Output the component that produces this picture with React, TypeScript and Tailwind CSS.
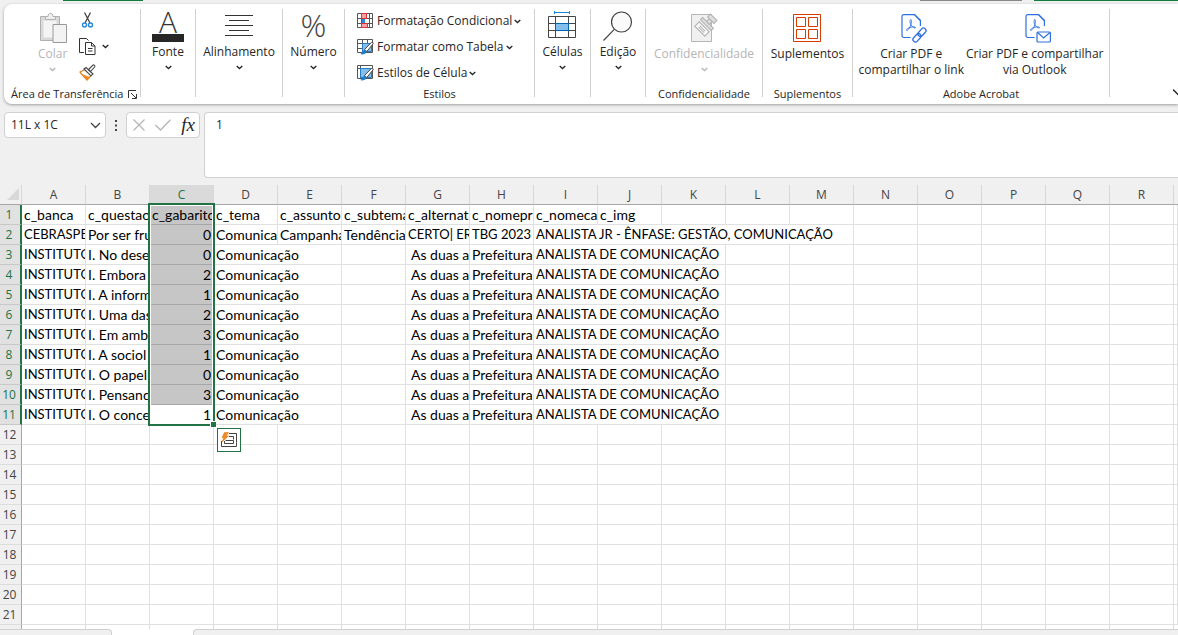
import type { ReactNode } from "react";
import clsx from "clsx";

const UI = "font-['Open_Sans','Noto_Sans',sans-serif]";

function Chevron({ className }: { className?: string }) {
  return (
    <svg className={clsx("w-[7px] h-[5px] shrink-0", className)} viewBox="0 0 7 5" fill="none" stroke="currentColor" strokeWidth="1.3">
      <path d="M.7 1 3.5 3.6 6.3 1" />
    </svg>
  );
}

function PasteIcon() {
  return (
    <svg width="28" height="32" viewBox="0 0 28 32" fill="none" stroke="#b0b0b0">
      <path d="M1.500 4.500h19v24h-19z" fill="#d9d9d9" />
      <path d="M4.500 8.500h13v17h-13z" fill="#f4f4f4" stroke="none" />
      <path d="M6.500 7.500v-3h2.500c0-2 1-3.200 2.500-3.200s2.500 1.200 2.500 3.200h2.500v3z" fill="#eee" />
      <path d="M14 12.500h13.500v18H14z" fill="#f3f3f3" stroke="#999" />
    </svg>
  );
}

function CutIcon() {
  return (
    <svg width="16" height="16" viewBox="0 0 16 16" fill="none">
      <path d="M5.500.5 11 11M11.500.5 6 11" stroke="#444" strokeWidth="1.300" />
      <circle cx="5.500" cy="13" r="2" stroke="#2b88d8" strokeWidth="1.400" />
      <circle cx="11.500" cy="13" r="2" stroke="#2b88d8" strokeWidth="1.400" />
    </svg>
  );
}

function CopyIcon() {
  return (
    <svg width="17" height="17" viewBox="0 0 17 17" fill="none" stroke="#333">
      <path d="M5 14.500H.5V.5h7l2 2" />
      <path d="M6.500 4.500h6l3.500 3.500v8.500H6.500z" fill="#fff" />
      <path d="M12.500 4.500V8H16M9 10.500h4.500M9 13h4.500" />
    </svg>
  );
}

function BrushIcon() {
  return (
    <svg width="17" height="17" viewBox="0 0 17 17" fill="none">
      <path d="M1 8 6 5.500l6 6L8 16 1.500 9z" fill="#fff" stroke="#e07b1a" strokeWidth="1.200" />
      <path d="M2 9.500 10.500 13 8 16z" fill="#f08c28" />
      <path d="m5 5 2-1.500 7 6.500-2 1.800z" fill="#fff" stroke="#444" strokeWidth="1.100" />
      <path d="m9.500 5.500 4.200-4.200c1-1 2.800.6 1.900 1.700L11.500 7.500z" fill="#fff" stroke="#444" strokeWidth="1.100" />
    </svg>
  );
}

function FontIcon() {
  return (
    <span className="flex w-8 flex-col items-center">
      <span className="h-[22px] text-[30px] leading-[20px] font-light text-[#333]">A</span>
      <span className="h-2 w-8 bg-[#262626]" />
    </span>
  );
}

function AlignIcon() {
  return (
    <svg width="28" height="24" viewBox="0 0 28 24" stroke="#333">
      <path d="M0 .5h28M4 5.500h20M0 10.500h28M4 15.500h20M0 20.500h28" />
    </svg>
  );
}

function CellsIcon() {
  return (
    <svg width="28" height="31" viewBox="0 0 28 31" fill="none">
      <path d="M6.500 0v3M21.500 0v3M6.500 1.500h15" stroke="#1a86d0" />
      <path d="M.5 5.500h27v21H.5zM7.500 5.500v21M20.500 5.500v21M.5 12.500h27M.5 19.500h27" stroke="#444" />
      <path d="M7.500 12.500h13v7h-13z" fill="#83beec" stroke="#0063b1" />
    </svg>
  );
}

function SearchIcon() {
  return (
    <svg width="30" height="32" viewBox="0 0 30 32" fill="none" stroke="#444" strokeWidth="1.200">
      <circle cx="18.500" cy="11" r="10" fill="#fafafa" />
      <path d="M11.300 18.300.5 29.500" />
    </svg>
  );
}

function LabelIcon() {
  return (
    <svg width="28" height="31" viewBox="0 0 28 31" fill="none" stroke="#b5b5b5">
      <path d="M1.500 2.500h20v27h-20z" fill="#f0f0f0" />
      <g transform="translate(12 17) rotate(45)" strokeWidth="1.200">
        <path d="M-7-3H7v6H-7z" fill="#fff" />
        <path d="M-4-.7h8M-4 1h8" strokeWidth="1" />
        <path d="M-7.500-8.500h15v3h-15z" fill="#e0e0e0" />
        <path d="M-2-12.500h4v4h-4z" fill="#e0e0e0" />
        <path d="M-4.500-16.500h9v4h-9z" fill="#e0e0e0" />
      </g>
    </svg>
  );
}

function AddinsIcon() {
  return (
    <svg width="28" height="28" viewBox="0 0 28 28" fill="none" stroke="#d83b01">
      <path d="M.5.5h27v27H.5zM3.500 3.500h9v9h-9zM15.500 3.500h9v9h-9zM3.500 15.500h9v9h-9zM15.500 15.500h9v9h-9z" />
    </svg>
  );
}

function PdfIcon({ kind }: { kind: "link" | "mail" }) {
  return (
    <svg className="mt-0.5 ml-1.5" width="26" height="29" viewBox="0 0 26 29" fill="none" stroke="#2f6fe0" strokeWidth="1.200">
      <path d="M9.500 23.500H3c-1.300 0-2-.8-2-2v-19C1 1.300 1.800.6 3 .6h10.500L19.400 6.500V12" />
      <path d="M13.500.6 19.400 6.500" />
      <path d="M9.700 5.500c1.200 0 .8 4.500-.6 7.200-1 2-2.300 3.800-3.400 3.800-1.300-.7 1.600-2.700 4.300-3.300 2.400-.6 4.800-.3 4.600.5-.4.800-3.200-.4-4.600-2.600-1.200-2-1.200-5.400-.3-5.600z" strokeWidth=".9" />
      {kind === "link" ? (
        <g transform="rotate(-48 18.500 21)" strokeWidth="1.300">
          <rect x="10" y="18.500" width="9.500" height="5" rx="2.500" />
          <rect x="17.500" y="18.500" width="9.500" height="5" rx="2.500" />
        </g>
      ) : (
        <g>
          <rect x="12" y="18" width="13.400" height="10" rx="1" fill="#fff" />
          <path d="m12.500 18.500 6.200 5.500 6.200-5.500" />
        </g>
      )}
    </svg>
  );
}

function ConditionalIcon() {
  return (
    <svg width="16" height="16" viewBox="0 0 16 16" fill="none">
      <path d="M.5.5h15v14H.5zM4.500.5v14M12.500.5v14M.5 5.500h15M.5 10.500h15" stroke="#555" />
      <path d="M4.500.5h5v5h-5zM4.500 10.500h6v4h-6z" fill="#f4a0a4" stroke="#e03038" />
      <path d="M5 6h3v4H5z" fill="#2b88d8" />
    </svg>
  );
}

function StyleTableIcon({ cell }: { cell?: boolean }) {
  return (
    <svg width="17" height="16" viewBox="0 0 17 16" fill="none">
      <path d={cell ? "M.5.5h15v13H.5zM3.500.5v13M.5 3.500h15" : "M.5.5h15v13H.5zM5.500.5v13M10.500.5v13M.5 4.500h15M.5 9.500h15"} stroke="#555" />
      <path d={cell ? "M3.500 3.500h11v9h-11z" : "M5.500 4.500h9v8h-9z"} fill="#83beec" stroke="#2b7cc4" />
      <path d="m7.500 10.500 6.800-7c1-1 2.500.4 1.700 1.500l-6.200 7.500z" fill="#fff" stroke="#444" />
      <path d="M3 15c2 0 2.300-3.500 4.500-4 1.800 0 2.600 1.600 1.500 3-1.300 1.500-4 1.700-6 1z" fill="#1a7fd0" />
    </svg>
  );
}

function RibbonGroup({ label, className, children }: { label?: string; className: string; children: ReactNode }) {
  return (
    <>
      <section className={clsx("flex shrink-0 flex-col justify-between pb-0.5", className)}>
        <div className="flex justify-center">{children}</div>
        {label && <div className="text-center text-[11px] leading-4">{label}</div>}
      </section>
      <span className="mt-[5px] h-[88px] w-px shrink-0 bg-[#d0d0d0]" />
    </>
  );
}

type BigButtonProps = { icon: ReactNode; label: ReactNode; low?: boolean; disabled?: boolean; arrow?: boolean };

function BigButton({ icon, label, low, disabled, arrow = true }: BigButtonProps) {
  return (
    <button
      type="button"
      disabled={disabled}
      className={clsx("flex shrink-0 flex-col items-center pt-[5px] whitespace-nowrap", disabled ? "text-[#b5b5b5]" : "text-[#262626]")}
    >
      <span className={clsx("flex items-center justify-center", low ? "h-[37px]" : "h-[35px]")}>{icon}</span>
      <span className="leading-4">{label}</span>
      {arrow && <Chevron className="mt-[5px]" />}
    </button>
  );
}

function StyleButton({ icon, label }: { icon: ReactNode; label: string }) {
  return (
    <button type="button" className="flex h-[26px] items-center whitespace-nowrap">
      <span className="w-5">{icon}</span>
      {label}
      <Chevron className="ml-0.5" />
    </button>
  );
}

function Ribbon() {
  return (
    <div className="relative ml-1 flex h-[100px] overflow-hidden rounded-l-lg bg-white text-[12px] text-[#262626] shadow-[0_1px_3px_rgba(0,0,0,0.35)]">
      <section className="flex w-[136px] shrink-0 flex-col justify-between pb-0.5">
        <div className="flex pl-[34px]">
          <BigButton icon={<PasteIcon />} label="Colar" low disabled />
          <div className="flex flex-col pt-[3px] pl-3">
            <button type="button" aria-label="Recortar" className="flex h-[26px] items-center"><CutIcon /></button>
            <button type="button" aria-label="Copiar" className="flex h-[26px] items-center gap-1.5"><CopyIcon /><Chevron /></button>
            <button type="button" aria-label="Pincel de Formatação" className="flex h-[26px] items-center"><BrushIcon /></button>
          </div>
        </div>
        <div className="flex items-center justify-between pr-[3px] pl-[7px] text-[11px] leading-4 whitespace-nowrap">
          Área de Transferência
          <button type="button" aria-label="Abrir painel">
            <svg width="9" height="9" viewBox="0 0 9 9" fill="none" stroke="#333">
              <path d="M.5 8V.5H8M3 3l5 5M8.500 4v4.500H4" />
            </svg>
          </button>
        </div>
      </section>
      <span className="mt-[5px] h-[88px] w-px shrink-0 bg-[#d0d0d0]" />
      <RibbonGroup className="w-[54px]">
        <BigButton icon={<FontIcon />} label="Fonte" />
      </RibbonGroup>
      <RibbonGroup className="w-[86px]">
        <BigButton icon={<AlignIcon />} label="Alinhamento" />
      </RibbonGroup>
      <RibbonGroup className="w-[61px]">
        <BigButton icon={<span className="h-9 text-[32px] leading-8 font-light text-[#444]">%</span>} label="Número" />
      </RibbonGroup>
      <RibbonGroup label="Estilos" className="w-[189px]">
        <div className="flex w-full flex-col items-start pt-1 pl-3">
          <StyleButton icon={<ConditionalIcon />} label="Formatação Condicional" />
          <StyleButton icon={<StyleTableIcon />} label="Formatar como Tabela" />
          <StyleButton icon={<StyleTableIcon cell />} label="Estilos de Célula" />
        </div>
      </RibbonGroup>
      <RibbonGroup className="w-[55px]">
        <BigButton icon={<CellsIcon />} label="Células" />
      </RibbonGroup>
      <RibbonGroup className="w-[54px]">
        <BigButton icon={<SearchIcon />} label="Edição" />
      </RibbonGroup>
      <RibbonGroup label="Confidencialidade" className="w-[116px]">
        <BigButton icon={<LabelIcon />} label="Confidencialidade" low disabled />
      </RibbonGroup>
      <RibbonGroup label="Suplementos" className="w-[89px]">
        <BigButton icon={<AddinsIcon />} label="Suplementos" low arrow={false} />
      </RibbonGroup>
      <RibbonGroup label="Adobe Acrobat" className="w-[256px]">
        <div className="flex gap-0.5">
          <BigButton icon={<PdfIcon kind="link" />} label={<>Criar PDF e<br />compartilhar o link</>} low arrow={false} />
          <BigButton icon={<PdfIcon kind="mail" />} label={<>Criar PDF e compartilhar<br />via Outlook</>} low arrow={false} />
        </div>
      </RibbonGroup>
      <button type="button" aria-label="Recolher faixa" className="mb-2 ml-auto self-end">
        <svg width="5" height="8" viewBox="0 0 5 8" fill="none" stroke="#222" strokeWidth="1.400">
          <path d="m0 1.500 6 6" />
        </svg>
      </button>
    </div>
  );
}

function FormulaBar() {
  return (
    <div className="flex items-start pt-2 pb-[7px] pl-1 text-[12px] text-[#262626]">
      <div className="flex h-[26px] w-[102px] items-center rounded border border-[#d0d0d0] bg-white pr-1 pl-1.5">
        <input aria-label="Caixa de nome" defaultValue="11L x 1C" className="w-full min-w-0 bg-transparent outline-none" />
        <button type="button" aria-label="Lista de nomes">
          <svg width="11" height="7" viewBox="0 0 11 7" fill="none" stroke="#444" strokeWidth="1.300">
            <path d="m1 1 4.500 4.500L10 1" />
          </svg>
        </button>
      </div>
      <svg className="mx-2 mt-2" width="4" height="11" viewBox="0 0 4 11" fill="#444">
        <path d="M1 0h2v2H1zM1 4.500h2v2H1zM1 9h2v2H1z" />
      </svg>
      <div className="flex h-[26px] w-[74px] items-center justify-between rounded border border-[#d0d0d0] bg-white pr-1 pl-1.5">
        <button type="button" aria-label="Cancelar">
          <svg width="12" height="12" viewBox="0 0 12 12" stroke="#b5b5b5" strokeWidth="1.300"><path d="m.5.5 11 11m0-11-11 11" /></svg>
        </button>
        <button type="button" aria-label="Inserir">
          <svg width="16" height="12" viewBox="0 0 16 12" fill="none" stroke="#b5b5b5" strokeWidth="1.300"><path d="m.5 6 5 5L15.500.8" /></svg>
        </button>
        <button type="button" aria-label="Inserir função" className="font-['Liberation_Serif',serif] text-[19px] leading-5 italic">fx</button>
      </div>
      <textarea
        aria-label="Barra de fórmulas"
        defaultValue="1"
        className="ml-1 block h-[66px] min-w-0 flex-1 resize-none rounded-l border border-r-0 border-[#d0d0d0] bg-white px-[11px] py-1 leading-4 outline-none"
      />
    </div>
  );
}

type Cell = { text: string; span?: number; num?: boolean; indent?: boolean; caps?: boolean };

const columns = "ABCDEFGHIJKLMNOPQR".split("");

const questions: [string, string][] = [
  ["I. No dese", "0"],
  ["I. Embora", "2"],
  ["I. A inform", "1"],
  ["I. Uma das", "2"],
  ["I. Em amb", "3"],
  ["I. A sociol", "1"],
  ["I. O papel", "0"],
  ["I. Pensand", "3"],
  ["I. O conce", "1"],
];

const rows: Cell[][] = [
  ["c_banca", "c_questao", "c_gabarito", "c_tema", "c_assunto", "c_subtema", "c_alternat", "c_nomepr", "c_nomeca", "c_img"].map((text) => ({ text })),
  [
    { text: "CEBRASPE", caps: true },
    { text: "Por ser fru" },
    { text: "0", num: true },
    { text: "Comunica" },
    { text: "Campanha" },
    { text: "Tendência" },
    { text: "CERTO| ER", caps: true },
    { text: "TBG 2023", caps: true },
    { text: "ANALISTA JR - ÊNFASE: GESTÃO, COMUNICAÇÃO", span: 5, caps: true },
  ],
  ...questions.map(([text, answer]): Cell[] => [
    { text: "INSTITUTO", caps: true },
    { text },
    { text: answer, num: true },
    { text: "Comunicação", span: 2 },
    { text: "" },
    { text: "As duas a", indent: true },
    { text: "Prefeitura" },
    { text: "ANALISTA DE COMUNICAÇÃO", span: 3, caps: true },
  ]),
];

function Row({ index }: { index: number }) {
  const cells = rows[index] ?? [];
  const used = cells.reduce((n, c) => n + (c.span ?? 1), 0);
  const selected = index < 11;
  return (
    <tr className="h-5">
      <th
        scope="row"
        className={clsx(
          UI,
          "border-b p-0 pr-0.5 text-center text-[12px] leading-[19px] font-normal",
          selected ? "border-r-2 border-b-[#c8c8c8] border-r-[#217346] bg-[#e1e1e1] text-[#217346]" : "border-r border-b-[#dcdcdc] border-r-[#a6a6a6] bg-[#f0f0f0] text-[#444]",
        )}
      >
        {index + 1}
      </th>
      {cells.map((c, i) => (
        <td
          key={i}
          colSpan={c.span}
          className={clsx(
            "overflow-hidden border-r border-b p-0 leading-[19px] whitespace-nowrap",
            c.caps && "text-[13px]",
            c.num ? "pr-0.5 text-right" : c.indent ? "pl-[5px]" : "pl-0.5",
            i === 2 && index < 10 ? "border-r-[#c6c6c6] border-b-[#a6a6a6] bg-[#c6c6c6]" : "border-[#e0e0e0]",
          )}
        >
          {c.text}
        </td>
      ))}
      {Array.from({ length: 19 - used }, (_, i) => (
        <td key={`e${i}`} className="border-r border-b border-[#e0e0e0] p-0" />
      ))}
    </tr>
  );
}

function Sheet() {
  return (
    <main className="relative flex-1 overflow-hidden bg-white">
      <table className="w-full table-fixed border-separate border-spacing-0 font-['Lato',sans-serif] text-[14px] text-black">
        <colgroup>
          <col className="w-[22px]" />
          {columns.map((c) => (
            <col key={c} className="w-16" />
          ))}
          <col />
        </colgroup>
        <thead>
          <tr className={clsx(UI, "h-5 bg-[#f0f0f0] text-[12px] text-[#444]")}>
            <th className="border-r border-b border-r-[#d8d8d8] border-b-[#a6a6a6] p-0">
              <svg className="ml-auto" width="15" height="13" viewBox="0 0 15 13"><path d="M13 0v12H1z" fill="#d8d8d8" /></svg>
            </th>
            {columns.map((c) => (
              <th
                key={c}
                scope="col"
                className={clsx(
                  "border-r border-b border-r-[#d8d8d8] border-b-[#a6a6a6] p-0 leading-[19px] font-normal",
                  c === "C" && "bg-[#dadada] text-[#217346]",
                )}
              >
                {c}
              </th>
            ))}
            <th className="border-b border-[#a6a6a6] p-0" />
          </tr>
        </thead>
        <tbody>
          {Array.from({ length: 21 }, (_, i) => (
            <Row key={i} index={i} />
          ))}
          <tr className="h-1">
            <td className="border-r border-[#a6a6a6] bg-[#f0f0f0] p-0" />
            {columns.map((c) => (
              <td key={c} className="border-r border-[#e0e0e0] p-0" />
            ))}
            <td className="p-0" />
          </tr>
        </tbody>
      </table>

      {/* selection frame, fill handle and quick analysis */}
      <div className="pointer-events-none absolute top-[18px] left-[148px] h-[223px] w-[67px] border-2 border-[#217346] shadow-[inset_0_0_0_1px_#fff]">
        <span className="absolute -right-[3px] -bottom-[3px] size-1.5 border-t border-l border-white bg-[#217346]" />
      </div>
      <button type="button" aria-label="Análise Rápida" className="absolute top-[243px] left-[217px] grid size-6 place-items-center border border-[#217346] bg-white">
        <svg width="18" height="16" viewBox="0 0 18 16" fill="none" stroke="#444">
          <path d="M9 1.500h7.500v9M9 4.500h4.500v3M1.500 9v5.500h15v-4M5.500 8.500h8v3h-9V9" />
          <path d="M4.500.5h4L6 4h2.500L2 10l1.800-4.500H2z" fill="#f08c28" stroke="#e07b1a" strokeWidth=".6" />
        </svg>
      </button>
    </main>
  );
}

export default function App() {
  return (
    <div className={clsx(UI, "flex min-h-screen flex-col overflow-hidden bg-[#f0f0f0]")}>
      <div className="flex h-1 items-start pl-[63px]">
        <span className="h-px w-20 bg-[#107c41]" />
        <span className="ml-auto h-px w-[102px] bg-[#8a8886]" />
        <span className="ml-3 h-px w-[144px] bg-[#107c41]" />
      </div>
      <Ribbon />
      <FormulaBar />
      <Sheet />
      <footer className="flex h-1.5 bg-white">
        <span className="w-28 rounded-tr border-t border-r border-[#d0d0d0] bg-[#f0f0f0]" />
        <span className="ml-[81px] flex-1 rounded-tl border-t border-l border-[#d0d0d0] bg-[#f0f0f0]" />
      </footer>
    </div>
  );
}
